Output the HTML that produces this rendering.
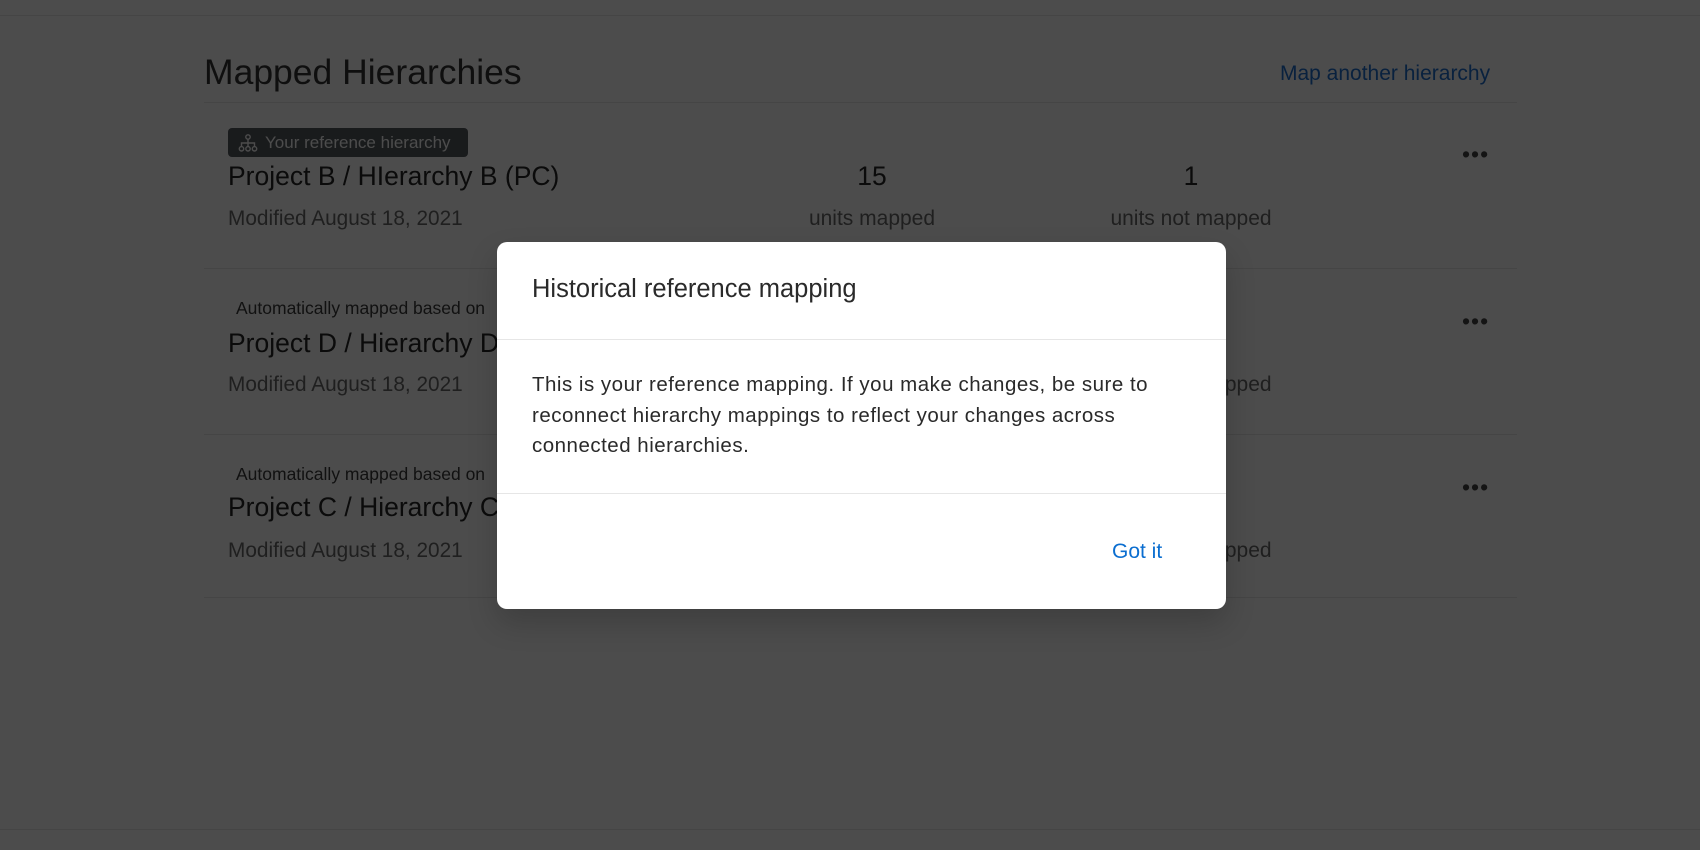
<!DOCTYPE html>
<html><head><meta charset="utf-8"><style>
*{margin:0;padding:0;box-sizing:border-box}
html,body{width:1700px;height:850px;background:#fff}
body{font-family:"Liberation Sans",sans-serif;position:relative;overflow:hidden;color:#222}
.a{position:absolute;white-space:nowrap}
.c{transform:translateX(-50%)}
.ln{position:absolute;height:1px;background:#e8e8e8}
.m{color:#6a6a6a;font-size:20.8px;line-height:24px}
.u{color:#6a6a6a;font-size:21px;line-height:24px}
.t{font-size:26.5px;line-height:30px;color:#262626}
.dots{position:absolute;font-size:23px;letter-spacing:1px;color:#444}
.au{font-size:17.5px;line-height:20px;color:#3a3a3a}
#ov{position:absolute;left:0;top:0;width:1700px;height:850px;background:rgba(0,0,0,.7)}
</style></head><body>
<div class="ln" style="left:0;right:0;top:15px"></div>
<div class="a" style="left:204px;top:51px;font-size:35.5px;line-height:42px;color:#333">Mapped Hierarchies</div>
<div class="a" style="left:1280px;top:62px;font-size:21px;line-height:24px;color:#1e6fd0">Map another hierarchy</div>
<div class="ln" style="left:204px;width:1313px;top:102px"></div>

<div class="a" style="left:228px;top:128px;width:240px;height:29px;background:#555a60;border-radius:4px;color:#fff;font-size:17px;line-height:29px;padding-left:37px">Your reference hierarchy</div>
<svg class="a" style="left:238px;top:133px" width="20" height="20" viewBox="0 0 20 20" fill="none" stroke="#fff" stroke-width="1.4"><circle cx="10" cy="4" r="2.2"/><path d="M10 6.2V10M3.5 13.5V10H16.5V13.5M10 10V13.5"/><circle cx="3.5" cy="15.8" r="2.2"/><circle cx="10" cy="15.8" r="2.2"/><circle cx="16.5" cy="15.8" r="2.2"/></svg>
<div class="a t" style="left:228px;top:161px">Project B / HIerarchy B (PC)</div>
<div class="a m" style="left:228px;top:207px">Modified August 18, 2021</div>
<div class="a c t" style="left:872px;top:161px">15</div>
<div class="a c u" style="left:872px;top:207px">units mapped</div>
<div class="a c t" style="left:1191px;top:161px">1</div>
<div class="a c u" style="left:1191px;top:207px">units not mapped</div>
<div class="dots a" style="left:1462px;top:141px">•••</div>
<div class="ln" style="left:204px;width:1313px;top:268px"></div>

<div class="a au" style="left:236px;top:298px">Automatically mapped based on</div>
<div class="a t" style="left:228px;top:328px">Project D / Hierarchy D</div>
<div class="a m" style="left:228px;top:373px">Modified August 18, 2021</div>
<div class="a c u" style="left:1191px;top:373px">units not mapped</div>
<div class="dots a" style="left:1462px;top:308px">•••</div>
<div class="ln" style="left:204px;width:1313px;top:434px"></div>

<div class="a au" style="left:236px;top:464px">Automatically mapped based on</div>
<div class="a t" style="left:228px;top:492px">Project C / Hierarchy C</div>
<div class="a m" style="left:228px;top:539px">Modified August 18, 2021</div>
<div class="a c u" style="left:1191px;top:539px">units not mapped</div>
<div class="dots a" style="left:1462px;top:474px">•••</div>
<div class="ln" style="left:204px;width:1313px;top:597px"></div>
<div class="ln" style="left:0;right:0;top:829px"></div>

<div id="ov"></div>

<div class="a" style="left:497px;top:242px;width:729px;height:367px;background:#fff;border-radius:10px;box-shadow:0 14px 30px rgba(0,0,0,.18)">
<div class="a" style="left:35px;top:32px;font-size:25.5px;line-height:30px;color:#2a2a2a">Historical reference mapping</div>
<div class="ln" style="left:0;right:0;top:97px;background:#e6e6e6"></div>
<div class="a" style="left:35px;top:128px;font-size:20.5px;letter-spacing:0.5px;line-height:30.5px;color:#2a2a2a;white-space:normal;width:640px">This is your reference mapping. If you make changes, be sure to reconnect hierarchy mappings to reflect your changes across connected hierarchies.</div>
<div class="ln" style="left:0;right:0;top:251px;background:#e6e6e6"></div>
<div class="a" style="left:615px;top:298px;font-size:21px;line-height:24px;color:#0b6ed0">Got it</div>
</div>
</body></html>
